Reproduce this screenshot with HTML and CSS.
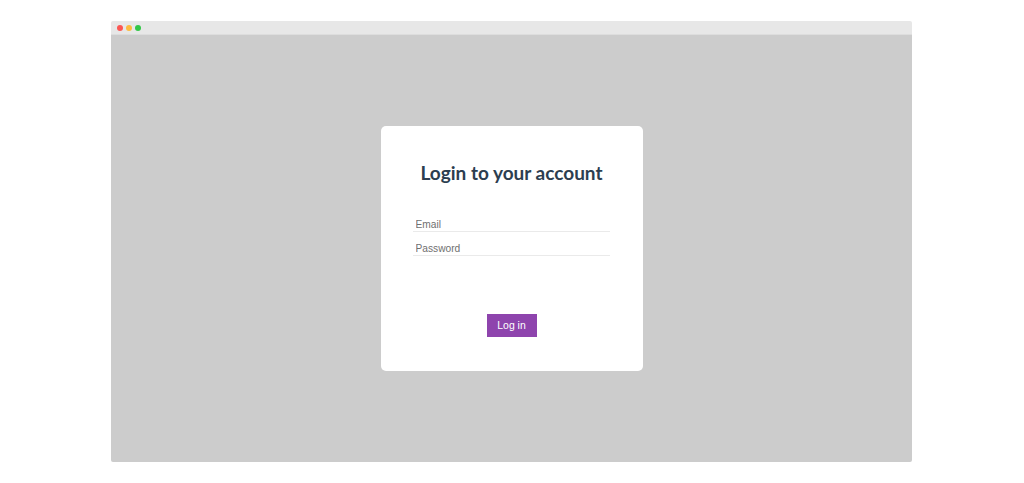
FILE: index.html
```html
<!DOCTYPE html>
<html lang="en">
<head>
<meta charset="utf-8">
<title>Login</title>
<link rel="stylesheet" href="styles.css">
</head>
<body>
<div class="window">
  <div class="titlebar">
    <span class="dot dot-red"></span>
    <span class="dot dot-yellow"></span>
    <span class="dot dot-green"></span>
  </div>
  <div class="viewport">
    <form class="card">
      <h1 class="title">Login to your account</h1>
      <div class="fields">
        <input class="field" type="email" placeholder="Email">
        <input class="field" type="password" placeholder="Password">
      </div>
      <button class="btn" type="button">Log in</button>
    </form>
  </div>
</div>
</body>
</html>
```
FILE: styles.css
```css
html, body {
  margin: 0;
  padding: 0;
  background: #ffffff;
}
body {
  font-family: "Liberation Sans", Arial, sans-serif;
  padding-top: 21px;
}
.window {
  width: 801px;
  margin: 0 auto 0 111px;
  display: flex;
  flex-direction: column;
  border-radius: 2px;
  overflow: hidden;
}
.titlebar {
  height: 14px;
  background: #e7e7e7;
  display: flex;
  align-items: center;
  gap: 3px;
  padding: 1px 0 0 6px;
  border-bottom: 1px solid #dddddd;
  box-sizing: border-box;
  flex: 0 0 auto;
}
.dot {
  width: 6px;
  height: 6px;
  border-radius: 50%;
}
.dot-red { background: #fc5753; }
.dot-yellow { background: #fdbc40; }
.dot-green { background: #33c748; }
.viewport {
  height: 427px;
  background: #cccccc;
  display: flex;
  align-items: center;
  justify-content: center;
}
.card {
  width: 262px;
  height: 245px;
  box-sizing: border-box;
  background: #ffffff;
  border-radius: 5px;
  padding: 35px 32px 0 32px;
  display: flex;
  flex-direction: column;
}
.title {
  margin: 0;
  font-family: Lato, "Open Sans", sans-serif;
  font-weight: 700;
  font-size: 19px;
  line-height: 24px;
  color: #2c3e50;
  text-align: center;
  letter-spacing: 0;
}
.fields {
  margin-top: 30px;
  display: flex;
  flex-direction: column;
  gap: 7px;
}
.field {
  display: block;
  box-sizing: border-box;
  width: 197px;
  height: 17px;
  margin: 0;
  padding: 2px 0 0 3px;
  border: 0;
  border-bottom: 1px solid #eaeaea;
  outline: none;
  background: transparent;
  font-family: "Liberation Sans", Arial, sans-serif;
  font-size: 10.2px;
  color: #333333;
}
.field::placeholder {
  color: #707070;
  opacity: 1;
}
.btn {
  align-self: center;
  margin-top: 58px;
  width: 50px;
  height: 23px;
  border: 0;
  border-radius: 0;
  background: #8e44ad;
  color: #ffffff;
  font-family: "Liberation Sans", Arial, sans-serif;
  font-size: 10.4px;
  padding: 0;
  cursor: pointer;
}
```
